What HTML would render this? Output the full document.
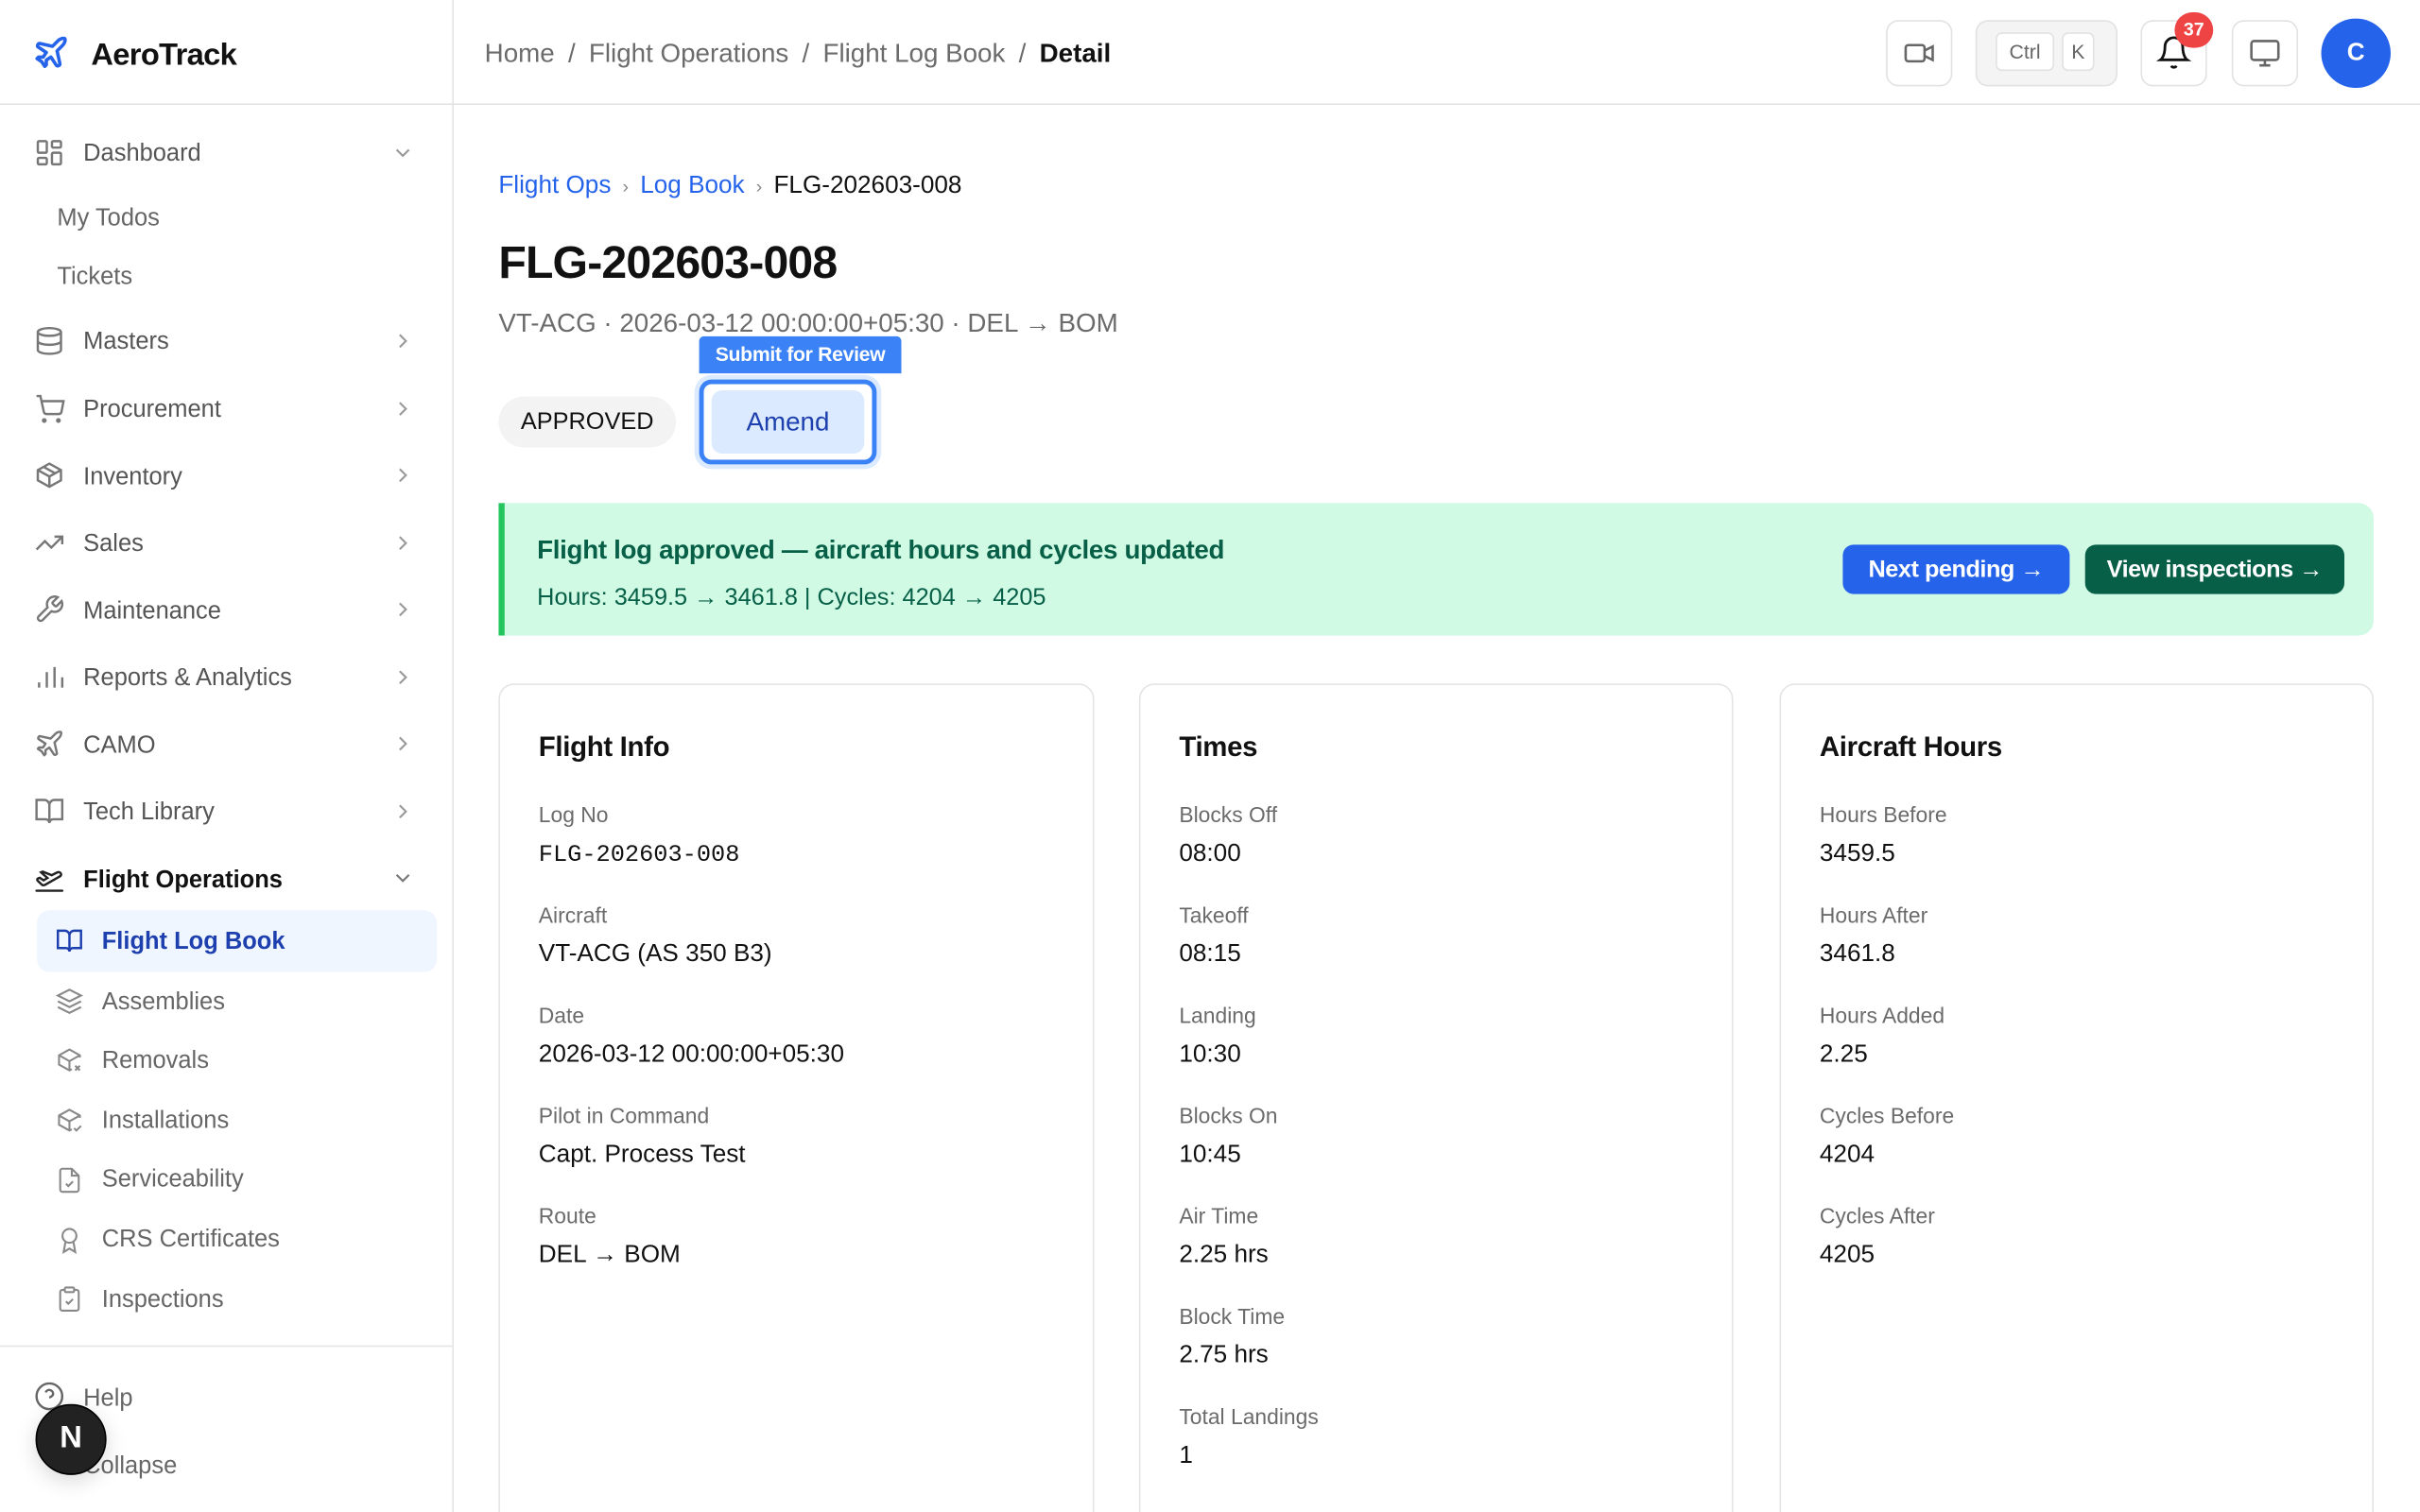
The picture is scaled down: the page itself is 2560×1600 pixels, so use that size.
<!DOCTYPE html>
<html><head><meta charset="utf-8"><style>
*{margin:0;padding:0;box-sizing:border-box}
html,body{width:2560px;height:1600px;overflow:hidden;background:#fff}
#s{position:absolute;left:0;top:0;width:1568px;height:980px;overflow:hidden;transform:scale(1.632653);transform-origin:0 0;font-family:"Liberation Sans",sans-serif;color:#111}
.a{position:absolute;white-space:nowrap}
.t{position:absolute;white-space:nowrap;line-height:20px;height:20px;margin-top:2px}
.nav{font-size:15.6px;color:#555}
.ic{position:absolute;width:20px;height:20px}
.chev{position:absolute;left:255px;width:12px;height:12px}
.card{position:absolute;top:443px;width:386px;height:560px;border:1px solid #e5e5e5;border-radius:10px;background:#fff}
.ct{position:absolute;left:25px;top:30px;font-size:18px;font-weight:bold;letter-spacing:-0.2px;color:#111}
.lb{position:absolute;left:25px;font-size:14px;color:#6b6b6b;margin-top:1px}
.vl{position:absolute;left:25px;font-size:16px;color:#111;margin-top:2px}
.hb{position:absolute;top:13px;height:43px;border:1px solid #e2e2e2;border-radius:8px;background:#fff}
</style></head><body><div id="s">
<!-- sidebar -->
<div class="a" style="left:293px;top:0;width:1px;height:980px;background:#e5e5e5"></div>
<div class="a" style="left:0;top:67px;width:1568px;height:1px;background:#e3e3e3"></div>
<svg class="a" style="left:21px;top:22px" width="24" height="24" viewBox="0 0 24 24" fill="none" stroke="#2563eb" stroke-width="2.2" stroke-linejoin="round" stroke-linecap="round"><path d="M17.8 19.2 16 11l3.5-3.5C21 6 21.5 4 21 3c-1-.5-3 0-4.5 1.5L13 8 4.8 6.2c-.5-.1-.9.1-1.1.5l-.3.5c-.2.5-.1 1 .3 1.3L9 12l-2 3H4l-1 1 3 2 2 3 1-1v-3l3-2 3.5 5.3c.3.4.8.5 1.3.3l.5-.2c.4-.3.6-.7.5-1.2z"/></svg>
<div class="t" style="left:59px;top:23px;font-size:20px;font-weight:bold;letter-spacing:-0.4px;line-height:22px">AeroTrack</div>

<svg class="ic" style="left:22px;top:89px" viewBox="0 0 24 24" fill="none" stroke="#777" stroke-width="1.8"><rect x="3" y="3" width="7" height="9" rx="1"/><rect x="14" y="3" width="7" height="5" rx="1"/><rect x="14" y="12" width="7" height="9" rx="1"/><rect x="3" y="16" width="7" height="5" rx="1"/></svg>
<div class="t nav" style="left:54px;top:88px">Dashboard</div>
<svg class="chev" style="top:93px" viewBox="0 0 12 12" fill="none" stroke="#999" stroke-width="1.3"><path d="M2 4l4 4 4-4"/></svg>
<div class="t nav" style="left:37px;top:130px;color:#666">My Todos</div>
<div class="t nav" style="left:37px;top:168px;color:#666">Tickets</div>

<svg class="ic" style="left:22px;top:211px" viewBox="0 0 24 24" fill="none" stroke="#777" stroke-width="1.8"><ellipse cx="12" cy="5" rx="9" ry="3"/><path d="M3 5v14c0 1.7 4 3 9 3s9-1.3 9-3V5"/><path d="M3 12c0 1.7 4 3 9 3s9-1.3 9-3"/></svg>
<div class="t nav" style="left:54px;top:210px">Masters</div>
<svg class="ic" style="left:22px;top:255px" viewBox="0 0 24 24" fill="none" stroke="#777" stroke-width="1.8"><circle cx="8" cy="21" r="1"/><circle cx="19" cy="21" r="1"/><path d="M2 2h3l2.7 12.4a2 2 0 0 0 2 1.6h9.7a2 2 0 0 0 2-1.6L23 6H6"/></svg>
<div class="t nav" style="left:54px;top:254px">Procurement</div>
<svg class="ic" style="left:22px;top:298px" viewBox="0 0 24 24" fill="none" stroke="#777" stroke-width="1.8"><path d="M21 8 12 3 3 8v8l9 5 9-5z"/><path d="M3 8l9 5 9-5M12 13v8M7.5 5.5l9 5"/></svg>
<div class="t nav" style="left:54px;top:298px">Inventory</div>
<svg class="ic" style="left:22px;top:342px" viewBox="0 0 24 24" fill="none" stroke="#777" stroke-width="1.8"><path d="M22 7l-8.5 8.5-5-5L2 17"/><path d="M16 7h6v6"/></svg>
<div class="t nav" style="left:54px;top:341px">Sales</div>
<svg class="ic" style="left:22px;top:385px" viewBox="0 0 24 24" fill="none" stroke="#777" stroke-width="1.8"><path d="M14.7 6.3a1 1 0 0 0 0 1.4l1.6 1.6a1 1 0 0 0 1.4 0l3.8-3.8a6 6 0 0 1-7.9 7.9l-6.9 6.9a2.1 2.1 0 0 1-3-3l6.9-6.9a6 6 0 0 1 7.9-7.9z"/></svg>
<div class="t nav" style="left:54px;top:385px">Maintenance</div>
<svg class="ic" style="left:22px;top:429px" viewBox="0 0 24 24" fill="none" stroke="#777" stroke-width="1.8"><path d="M4 20v-4M10 20V8M16 20V4M22 20v-8"/></svg>
<div class="t nav" style="left:54px;top:428px">Reports &amp; Analytics</div>
<svg class="ic" style="left:22px;top:472px" viewBox="0 0 24 24" fill="none" stroke="#777" stroke-width="1.8" stroke-linejoin="round"><path d="M17.8 19.2 16 11l3.5-3.5C21 6 21.5 4 21 3c-1-.5-3 0-4.5 1.5L13 8 4.8 6.2c-.5-.1-.9.1-1.1.5l-.3.5c-.2.5-.1 1 .3 1.3L9 12l-2 3H4l-1 1 3 2 2 3 1-1v-3l3-2 3.5 5.3c.3.4.8.5 1.3.3l.5-.2c.4-.3.6-.7.5-1.2z"/></svg>
<div class="t nav" style="left:54px;top:472px">CAMO</div>
<svg class="ic" style="left:22px;top:516px" viewBox="0 0 24 24" fill="none" stroke="#777" stroke-width="1.8"><path d="M2 3h6a4 4 0 0 1 4 4v14a3 3 0 0 0-3-3H2zM22 3h-6a4 4 0 0 0-4 4v14a3 3 0 0 1 3-3h7z"/></svg>
<div class="t nav" style="left:54px;top:515px">Tech Library</div>
<svg class="chev" style="top:215px" viewBox="0 0 12 12" fill="none" stroke="#999" stroke-width="1.3"><path d="M4 2l4 4-4 4"/></svg>
<svg class="chev" style="top:259px" viewBox="0 0 12 12" fill="none" stroke="#999" stroke-width="1.3"><path d="M4 2l4 4-4 4"/></svg>
<svg class="chev" style="top:302px" viewBox="0 0 12 12" fill="none" stroke="#999" stroke-width="1.3"><path d="M4 2l4 4-4 4"/></svg>
<svg class="chev" style="top:346px" viewBox="0 0 12 12" fill="none" stroke="#999" stroke-width="1.3"><path d="M4 2l4 4-4 4"/></svg>
<svg class="chev" style="top:389px" viewBox="0 0 12 12" fill="none" stroke="#999" stroke-width="1.3"><path d="M4 2l4 4-4 4"/></svg>
<svg class="chev" style="top:433px" viewBox="0 0 12 12" fill="none" stroke="#999" stroke-width="1.3"><path d="M4 2l4 4-4 4"/></svg>
<svg class="chev" style="top:476px" viewBox="0 0 12 12" fill="none" stroke="#999" stroke-width="1.3"><path d="M4 2l4 4-4 4"/></svg>
<svg class="chev" style="top:520px" viewBox="0 0 12 12" fill="none" stroke="#999" stroke-width="1.3"><path d="M4 2l4 4-4 4"/></svg>

<svg class="ic" style="left:22px;top:559px" viewBox="0 0 24 24" fill="none" stroke="#222" stroke-width="1.8" stroke-linecap="round"><path d="M2 22h20"/><path d="M6.4 17.5 2.8 14.1a1 1 0 0 1 .3-1.6l1.4-.6 3 2 3-1.8-5-4.4 1.3-.6 7 2.8 4.2-2.1c1.2-.6 2.6-.2 3 .9.3.9-.1 1.8-.9 2.2L9 17.2a3 3 0 0 1-2.6.3z"/></svg>
<div class="t nav" style="left:54px;top:559px;color:#111;font-weight:bold">Flight Operations</div>
<svg class="chev" style="top:563px" viewBox="0 0 12 12" fill="none" stroke="#777" stroke-width="1.3"><path d="M2 4l4 4 4-4"/></svg>
<div class="a" style="left:24px;top:590px;width:259px;height:40px;border-radius:8px;background:#eff6ff"></div>
<svg class="ic" style="left:36px;top:601px;width:18px;height:18px" viewBox="0 0 24 24" fill="none" stroke="#1e40af" stroke-width="2"><path d="M2 3h6a4 4 0 0 1 4 4v14a3 3 0 0 0-3-3H2zM22 3h-6a4 4 0 0 0-4 4v14a3 3 0 0 1 3-3h7z"/></svg>
<div class="t nav" style="left:66px;top:599px;color:#1e40af;font-weight:bold">Flight Log Book</div>
<svg class="ic" style="left:36px;top:640px;width:18px;height:18px" viewBox="0 0 24 24" fill="none" stroke="#888" stroke-width="1.7"><path d="M12 2 2 7l10 5 10-5z"/><path d="M2 12l10 5 10-5M2 17l10 5 10-5"/></svg>
<div class="t nav" style="left:66px;top:638px;color:#666">Assemblies</div>
<svg class="ic" style="left:36px;top:678px;width:18px;height:18px" viewBox="0 0 24 24" fill="none" stroke="#888" stroke-width="1.7"><path d="M21 10V8l-9-5-9 5v8l9 5 2-1"/><path d="M3 8l9 5 9-5M12 13v8M17 17l4 4M21 17l-4 4"/></svg>
<div class="t nav" style="left:66px;top:676px;color:#666">Removals</div>
<svg class="ic" style="left:36px;top:717px;width:18px;height:18px" viewBox="0 0 24 24" fill="none" stroke="#888" stroke-width="1.7"><path d="M21 10V8l-9-5-9 5v8l9 5 2-1"/><path d="M3 8l9 5 9-5M12 13v8M16 19l2 2 4-4"/></svg>
<div class="t nav" style="left:66px;top:715px;color:#666">Installations</div>
<svg class="ic" style="left:36px;top:756px;width:18px;height:18px" viewBox="0 0 24 24" fill="none" stroke="#888" stroke-width="1.7"><path d="M14 2H6a2 2 0 0 0-2 2v16a2 2 0 0 0 2 2h12a2 2 0 0 0 2-2V8z"/><path d="M14 2v6h6M9 15l2 2 4-4"/></svg>
<div class="t nav" style="left:66px;top:753px;color:#666">Serviceability</div>
<svg class="ic" style="left:36px;top:795px;width:18px;height:18px" viewBox="0 0 24 24" fill="none" stroke="#888" stroke-width="1.7"><circle cx="12" cy="8" r="6"/><path d="M15.5 13.5 17 22l-5-3-5 3 1.5-8.5"/></svg>
<div class="t nav" style="left:66px;top:792px;color:#666">CRS Certificates</div>
<svg class="ic" style="left:36px;top:833px;width:18px;height:18px" viewBox="0 0 24 24" fill="none" stroke="#888" stroke-width="1.7"><rect x="8" y="2" width="8" height="4" rx="1"/><path d="M16 4h2a2 2 0 0 1 2 2v14a2 2 0 0 1-2 2H6a2 2 0 0 1-2-2V6a2 2 0 0 1 2-2h2M9 14l2 2 4-4"/></svg>
<div class="t nav" style="left:66px;top:831px;color:#666">Inspections</div>
<div class="a" style="left:0;top:872px;width:293px;height:1px;background:#e5e5e5"></div>
<svg class="ic" style="left:22px;top:895px" viewBox="0 0 24 24" fill="none" stroke="#666" stroke-width="1.8"><circle cx="12" cy="12" r="10"/><path d="M9.1 9a3 3 0 0 1 5.8 1c0 2-3 3-3 3M12 17h.01"/></svg>
<div class="t nav" style="left:54px;top:895px;color:#666">Help</div>
<div class="t nav" style="left:54px;top:939px;color:#666">Collapse</div>
<div class="a" style="left:23px;top:910px;width:46px;height:46px;border-radius:50%;background:#222;border:1.5px solid #000;box-shadow:0 4px 14px rgba(0,0,0,.15);color:#fff;font-size:20px;font-weight:bold;text-align:center;line-height:43px">N</div>

<!-- header -->
<div class="t" style="left:314px;top:23px;font-size:17px;color:#6b6b6b">Home <span style="margin:0 4px">/</span> Flight Operations <span style="margin:0 4px">/</span> Flight Log Book <span style="margin:0 4px">/</span> <b style="color:#111">Detail</b></div>
<div class="hb" style="left:1222px;width:43px"></div>
<svg class="a" style="left:1233px;top:24px" width="21" height="21" viewBox="0 0 24 24" fill="none" stroke="#666" stroke-width="1.8"><rect x="2" y="6" width="14" height="12" rx="2"/><path d="m16 10 6-3v10l-6-3"/></svg>
<div class="hb" style="left:1280px;width:92px;background:#f4f4f4"></div>
<div class="a" style="left:1293px;top:21px;width:38px;height:25px;border:1px solid #e2e2e2;border-radius:4px;background:#fff;font-size:13px;color:#666;text-align:center;line-height:23px">Ctrl</div>
<div class="a" style="left:1336px;top:21px;width:21px;height:25px;border:1px solid #e2e2e2;border-radius:4px;background:#fff;font-size:13px;color:#666;text-align:center;line-height:23px">K</div>
<div class="hb" style="left:1387px;width:43px"></div>
<svg class="a" style="left:1397px;top:22px" width="23" height="24" viewBox="0 0 24 24" fill="none" stroke="#111" stroke-width="1.8"><path d="M6 8a6 6 0 0 1 12 0c0 7 3 9 3 9H3s3-2 3-9"/><path d="M10.3 21a1.9 1.9 0 0 0 3.4 0"/></svg>
<div class="a" style="left:1409px;top:8px;width:25px;height:23px;border-radius:12px;background:#ef4444;color:#fff;font-size:12px;font-weight:bold;text-align:center;line-height:23px">37</div>
<div class="hb" style="left:1446px;width:43px"></div>
<svg class="a" style="left:1457px;top:24px" width="21" height="21" viewBox="0 0 24 24" fill="none" stroke="#666" stroke-width="1.8"><rect x="2" y="3" width="20" height="14" rx="2"/><path d="M8 21h8M12 17v4"/></svg>
<div class="a" style="left:1504px;top:12px;width:45px;height:45px;border-radius:50%;background:#2563eb;color:#fff;font-size:16px;font-weight:bold;text-align:center;line-height:45px">C</div>

<!-- content -->
<div class="t" style="left:323px;top:109px;font-size:16px;color:#2563eb">Flight Ops <span style="color:#888;margin:0 3px;font-size:12px">›</span> Log Book <span style="color:#888;margin:0 3px;font-size:12px">›</span> <span style="color:#111">FLG-202603-008</span></div>
<div class="a" style="left:323px;top:154px;font-size:29.5px;font-weight:bold;letter-spacing:-0.5px;line-height:34px">FLG-202603-008</div>
<div class="t" style="left:323px;top:198px;font-size:17px;color:#6b6b6b">VT-ACG · 2026-03-12 00:00:00+05:30 · DEL → BOM</div>
<div class="a" style="left:323px;top:257px;width:115px;height:33px;border-radius:17px;background:#f3f3f3;font-size:15.5px;text-align:center;line-height:33px;color:#111">APPROVED</div>
<div class="a" style="left:453px;top:218px;width:131px;height:24px;background:#3b82f6;border-radius:3px 3px 0 0;color:#fff;font-size:13px;font-weight:bold;text-align:center;line-height:24px;letter-spacing:-0.2px">Submit for Review</div>
<div class="a" style="left:453px;top:246px;width:115px;height:55px;border-radius:8px;border:3px solid #3b82f6;box-shadow:0 0 0 3px #dbeafe;background:#fff"></div>
<div class="a" style="left:461px;top:253px;width:99px;height:41px;border-radius:7px;background:#dbeafe;color:#1e40af;font-size:17px;text-align:center;line-height:42px">Amend</div>

<div class="a" style="left:323px;top:326px;width:1215px;height:86px;background:#d1fae5;border-radius:0 10px 10px 0;border-left:4px solid #22c55e"></div>
<div class="t" style="left:348px;top:345px;font-size:17px;font-weight:bold;color:#065f46;letter-spacing:-0.2px">Flight log approved — aircraft hours and cycles updated</div>
<div class="t" style="left:348px;top:376px;font-size:15.5px;color:#065f46">Hours: 3459.5 → 3461.8 | Cycles: 4204 → 4205</div>
<div class="a" style="left:1194px;top:353px;width:147px;height:32px;border-radius:7px;background:#2563eb;color:#fff;font-size:15.5px;font-weight:bold;text-align:center;line-height:33px;letter-spacing:-0.3px">Next pending →</div>
<div class="a" style="left:1351px;top:353px;width:168px;height:32px;border-radius:7px;background:#065f46;color:#fff;font-size:15.5px;font-weight:bold;text-align:center;line-height:33px;letter-spacing:-0.3px">View inspections →</div>

<div class="card" style="left:323px">
<div class="ct">Flight Info</div>
<div class="lb" style="top:75px">Log No</div><div class="vl" style="top:99px;font-family:'Liberation Mono',monospace;font-size:15.5px">FLG-202603-008</div>
<div class="lb" style="top:140px">Aircraft</div><div class="vl" style="top:164px">VT-ACG (AS 350 B3)</div>
<div class="lb" style="top:205px">Date</div><div class="vl" style="top:229px">2026-03-12 00:00:00+05:30</div>
<div class="lb" style="top:270px">Pilot in Command</div><div class="vl" style="top:294px">Capt. Process Test</div>
<div class="lb" style="top:335px">Route</div><div class="vl" style="top:359px">DEL → BOM</div>
</div>
<div class="card" style="left:738px;width:385px">
<div class="ct">Times</div>
<div class="lb" style="top:75px">Blocks Off</div><div class="vl" style="top:99px">08:00</div>
<div class="lb" style="top:140px">Takeoff</div><div class="vl" style="top:164px">08:15</div>
<div class="lb" style="top:205px">Landing</div><div class="vl" style="top:229px">10:30</div>
<div class="lb" style="top:270px">Blocks On</div><div class="vl" style="top:294px">10:45</div>
<div class="lb" style="top:335px">Air Time</div><div class="vl" style="top:359px">2.25 hrs</div>
<div class="lb" style="top:400px">Block Time</div><div class="vl" style="top:424px">2.75 hrs</div>
<div class="lb" style="top:465px">Total Landings</div><div class="vl" style="top:489px">1</div>
</div>
<div class="card" style="left:1153px;width:385px">
<div class="ct">Aircraft Hours</div>
<div class="lb" style="top:75px">Hours Before</div><div class="vl" style="top:99px">3459.5</div>
<div class="lb" style="top:140px">Hours After</div><div class="vl" style="top:164px">3461.8</div>
<div class="lb" style="top:205px">Hours Added</div><div class="vl" style="top:229px">2.25</div>
<div class="lb" style="top:270px">Cycles Before</div><div class="vl" style="top:294px">4204</div>
<div class="lb" style="top:335px">Cycles After</div><div class="vl" style="top:359px">4205</div>
</div>
</div></body></html>
